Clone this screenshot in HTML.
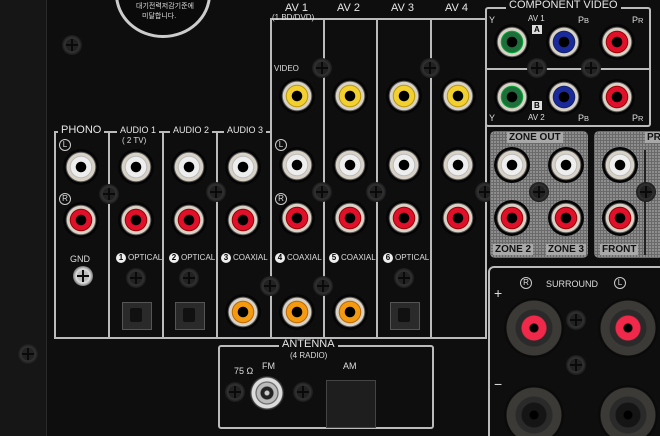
<!DOCTYPE html><html><head><style>
html,body{margin:0;width:660px;height:436px;overflow:hidden}
body{background:#0e0e0e;position:relative;font-family:"Liberation Sans","Noto Sans CJK KR",sans-serif;color:#ddd}
div,i,span{position:absolute;display:block}
.strip{left:0;top:0;width:46px;height:436px;background:#161616;border-right:1px solid #2a2a2a}
.v{width:2px;background:#bbb}
.h{height:2px;background:#bbb}
.lb{background:#0e0e0e;font-size:10px;padding:0 3px;line-height:11px;white-space:nowrap;color:#e6e6e6}
.sm{font-size:8px;color:#ddd;white-space:nowrap}
.j{width:36px;height:36px;margin:-18px 0 0 -18px;border-radius:50%}
.w{background:radial-gradient(circle,#000 0 5px,#eee 5.5px 10px,#bbb 10.5px 11px,#d8d2c6 11.5px 14px,#555 14.5px 15px,#050505 15.5px)}
.r{background:radial-gradient(circle,#000 0 5px,#e0102a 5.5px 10px,#900 10.5px 11px,#d8d2c6 11.5px 14px,#555 14.5px 15px,#050505 15.5px)}
.y{background:radial-gradient(circle,#000 0 5px,#f2d030 5.5px 10px,#b90 10.5px 11px,#d8d2c6 11.5px 14px,#555 14.5px 15px,#050505 15.5px)}
.o{background:radial-gradient(circle,#000 0 5px,#f39a10 5.5px 10px,#b60 10.5px 11px,#d8d2c6 11.5px 14px,#555 14.5px 15px,#050505 15.5px)}
.g{background:radial-gradient(circle,#000 0 5px,#1d6e3a 5.5px 10px,#0a3 10.5px 11px,#d8d2c6 11.5px 14px,#555 14.5px 15px,#050505 15.5px)}
.b{background:radial-gradient(circle,#000 0 5px,#1a2a9a 5.5px 10px,#126 10.5px 11px,#d8d2c6 11.5px 14px,#555 14.5px 15px,#050505 15.5px)}
.s{width:20px;height:20px;margin:-10px 0 0 -10px;border-radius:50%;background:radial-gradient(circle,#222 0 6px,#333 7px,#1a1a1a 10px)}
.s:before{content:"";position:absolute;left:9px;top:4px;width:2px;height:12px;background:#0a0a0a}
.s:after{content:"";position:absolute;left:4px;top:9px;width:12px;height:2px;background:#0a0a0a}
.opt{width:28px;height:26px;margin:-13px 0 0 -14px;background:#2a2a2a;border:1px solid #555}
.opt:after{content:"";position:absolute;left:7px;top:5px;width:12px;height:14px;background:#111;border-radius:2px}
.circ{font-size:8px;border:1px solid #ccc;border-radius:50%;width:10px;height:10px;line-height:10px;text-align:center}
.num{display:inline-block;position:static;background:#eee;color:#000;border-radius:50%;width:10px;height:10px;line-height:10px;text-align:center;font-weight:bold;font-size:8px;margin-right:2px}
.gray{background:#8e8e8e;background-image:repeating-linear-gradient(0deg,#6a6a6a 0 1px,transparent 1px 3px),repeating-linear-gradient(90deg,#6a6a6a 0 1px,transparent 1px 3px);border-radius:5px}
.gl{color:#111;font-size:10px;font-weight:bold;white-space:nowrap;background:#a8a8a8;padding:0 2px}
.sp{width:60px;height:60px;margin:-30px 0 0 -30px;border-radius:50%;background:radial-gradient(circle,#000 0 4px,#f0284a 5px 12px,#2a2a2a 13px 18px,#3c3a36 19px 27px,#0a0a0a 28px)}
.spb{width:60px;height:60px;margin:-30px 0 0 -30px;border-radius:50%;background:radial-gradient(circle,#000 0 4px,#151515 5px 12px,#2a2a2a 13px 18px,#3c3a36 19px 27px,#0a0a0a 28px)}
</style></head><body>
<div class="strip"></div>
<div style="left:115px;top:-50px;width:90px;height:82px;border:3px solid #ccc;border-radius:50%;background:#0a0a0a"></div>
<div class="sm" style="left:136px;top:1px;font-size:7px">대기전력저감기준에</div>
<div class="sm" style="left:142px;top:11px;font-size:7px">미달합니다.</div>
<i class="s" style="left:72px;top:45px"></i>
<i class="s" style="left:28px;top:354px"></i>

<div class="h" style="left:54px;top:131px;width:218px"></div>
<div class="h" style="left:271px;top:18px;width:215px"></div>
<div class="h" style="left:54px;top:337px;width:433px"></div>
<div class="v" style="left:54px;top:131px;height:207px"></div>
<div class="v" style="left:108px;top:131px;height:207px"></div>
<div class="v" style="left:162px;top:131px;height:207px"></div>
<div class="v" style="left:216px;top:131px;height:207px"></div>
<div class="v" style="left:270px;top:18px;height:320px"></div>
<div class="v" style="left:323px;top:18px;height:320px"></div>
<div class="v" style="left:376px;top:18px;height:320px"></div>
<div class="v" style="left:430px;top:18px;height:320px"></div>
<div class="v" style="left:485px;top:18px;height:320px"></div>
<span class="lb" style="left:58px;top:125px;font-size:11px">PHONO</span>
<span class="lb" style="left:117px;top:125px;font-size:9px">AUDIO 1</span>
<span class="sm" style="left:122px;top:136px">( 2 TV)</span>
<span class="lb" style="left:170px;top:125px;font-size:9px">AUDIO 2</span>
<span class="lb" style="left:224px;top:125px;font-size:9px">AUDIO 3</span>
<span class="lb" style="left:282px;top:3px;font-size:11px">AV 1</span>
<span class="sm" style="left:272px;top:13px">(1 BD/DVD)</span>
<span class="lb" style="left:334px;top:3px;font-size:11px">AV 2</span>
<span class="lb" style="left:388px;top:3px;font-size:11px">AV 3</span>
<span class="lb" style="left:442px;top:3px;font-size:11px">AV 4</span>
<span class="sm" style="left:274px;top:64px;font-size:8px">VIDEO</span>
<span class="circ" style="left:59px;top:139px">L</span>
<span class="circ" style="left:59px;top:193px">R</span>
<span class="circ" style="left:275px;top:139px">L</span>
<span class="circ" style="left:275px;top:193px">R</span>

<i class="j y" style="left:297px;top:96px"></i><i class="j y" style="left:350px;top:96px"></i><i class="j y" style="left:404px;top:96px"></i><i class="j y" style="left:458px;top:96px"></i>
<i class="j w" style="left:81px;top:167px"></i><i class="j w" style="left:136px;top:167px"></i><i class="j w" style="left:189px;top:167px"></i><i class="j w" style="left:243px;top:167px"></i><i class="j w" style="left:297px;top:165px"></i><i class="j w" style="left:350px;top:165px"></i><i class="j w" style="left:404px;top:165px"></i><i class="j w" style="left:458px;top:165px"></i>
<i class="j r" style="left:81px;top:220px"></i><i class="j r" style="left:136px;top:220px"></i><i class="j r" style="left:189px;top:220px"></i><i class="j r" style="left:243px;top:220px"></i><i class="j r" style="left:297px;top:218px"></i><i class="j r" style="left:350px;top:218px"></i><i class="j r" style="left:404px;top:218px"></i><i class="j r" style="left:458px;top:218px"></i>
<i class="s" style="left:322px;top:68px"></i><i class="s" style="left:430px;top:68px"></i>
<i class="s" style="left:109px;top:194px"></i><i class="s" style="left:216px;top:192px"></i><i class="s" style="left:322px;top:192px"></i><i class="s" style="left:376px;top:192px"></i><i class="s" style="left:485px;top:192px"></i>

<span class="sm" style="left:70px;top:254px;font-size:9px">GND</span>
<i class="s" style="left:83px;top:276px;background:radial-gradient(circle,#bbb 0 5px,#ddd 7px,#777 10px)"></i>
<span class="sm" style="left:116px;top:253px"><span class="num">1</span>OPTICAL</span>
<span class="sm" style="left:169px;top:253px"><span class="num">2</span>OPTICAL</span>
<span class="sm" style="left:221px;top:253px"><span class="num">3</span>COAXIAL</span>
<span class="sm" style="left:275px;top:253px"><span class="num">4</span>COAXIAL</span>
<span class="sm" style="left:329px;top:253px"><span class="num">5</span>COAXIAL</span>
<span class="sm" style="left:383px;top:253px"><span class="num">6</span>OPTICAL</span>
<i class="s" style="left:136px;top:278px"></i><i class="s" style="left:189px;top:278px"></i><i class="s" style="left:404px;top:278px"></i>
<i class="s" style="left:270px;top:286px"></i><i class="s" style="left:323px;top:286px"></i>
<i class="opt" style="left:136px;top:315px"></i><i class="opt" style="left:189px;top:315px"></i><i class="opt" style="left:404px;top:315px"></i>
<i class="j o" style="left:243px;top:312px"></i><i class="j o" style="left:297px;top:312px"></i><i class="j o" style="left:350px;top:312px"></i>

<div style="left:218px;top:345px;width:212px;height:80px;border:2px solid #bbb;border-radius:3px"></div>
<span class="lb" style="left:279px;top:339px;font-size:11px">ANTENNA</span>
<span class="sm" style="left:290px;top:351px">(4 RADIO)</span>
<span class="sm" style="left:234px;top:366px;font-size:9px">75 Ω</span>
<span class="sm" style="left:262px;top:361px;font-size:9px">FM</span>
<span class="sm" style="left:343px;top:361px;font-size:9px">AM</span>
<i class="s" style="left:235px;top:392px"></i><i class="s" style="left:303px;top:392px"></i>
<i style="left:250px;top:376px;width:34px;height:34px;border-radius:50%;background:radial-gradient(circle,#ccc 0 2px,#222 3px 6px,#bbb 7px 10px,#555 11px,#ddd 12px 15px,#333 16px)"></i>
<div style="left:326px;top:380px;width:48px;height:46px;background:#1e1e1e;border:1px solid #444"></div>

<div style="left:485px;top:7px;width:162px;height:116px;border:2px solid #bbb;border-radius:3px"></div>
<div class="h" style="left:485px;top:68px;width:164px"></div>
<span class="lb" style="left:506px;top:0px;font-size:11px">COMPONENT VIDEO</span>
<span class="sm" style="left:489px;top:15px;font-size:9px">Y</span>
<span class="sm" style="left:528px;top:14px">AV 1</span>
<span class="sm" style="left:532px;top:25px;background:#ddd;color:#000;font-weight:bold;padding:0 2px">A</span>
<span class="sm" style="left:578px;top:15px;font-size:9px">P<small>B</small></span>
<span class="sm" style="left:632px;top:15px;font-size:9px">P<small>R</small></span>
<span class="sm" style="left:489px;top:113px;font-size:9px">Y</span>
<span class="sm" style="left:528px;top:113px">AV 2</span>
<span class="sm" style="left:532px;top:101px;background:#ddd;color:#000;font-weight:bold;padding:0 2px">B</span>
<span class="sm" style="left:578px;top:113px;font-size:9px">P<small>B</small></span>
<span class="sm" style="left:632px;top:113px;font-size:9px">P<small>R</small></span>
<i class="j g" style="left:512px;top:42px"></i><i class="j b" style="left:564px;top:42px"></i><i class="j r" style="left:617px;top:42px"></i>
<i class="j g" style="left:512px;top:97px"></i><i class="j b" style="left:564px;top:97px"></i><i class="j r" style="left:617px;top:97px"></i>
<i class="s" style="left:537px;top:68px"></i><i class="s" style="left:591px;top:68px"></i>

<div class="gray" style="left:490px;top:131px;width:98px;height:127px"></div>
<div class="gray" style="left:594px;top:131px;width:70px;height:127px"></div>
<span class="gl" style="left:507px;top:132px">ZONE OUT</span>
<span class="gl" style="left:645px;top:132px">PR</span>
<span class="gl" style="left:493px;top:244px">ZONE 2</span>
<span class="gl" style="left:546px;top:244px">ZONE 3</span>
<span class="gl" style="left:600px;top:244px">FRONT</span>
<div style="left:644px;top:150px;width:2px;height:105px;background:#222"></div>
<i class="j w" style="left:512px;top:165px"></i><i class="j w" style="left:566px;top:165px"></i><i class="j w" style="left:620px;top:165px"></i>
<i class="j r" style="left:512px;top:218px"></i><i class="j r" style="left:566px;top:218px"></i><i class="j r" style="left:620px;top:218px"></i>
<i class="s" style="left:539px;top:192px"></i><i class="s" style="left:646px;top:192px"></i>

<div style="left:488px;top:266px;width:180px;height:180px;border:2px solid #bbb;border-radius:6px"></div>
<span class="sm" style="left:494px;top:285px;font-size:14px">+</span>
<span class="sm" style="left:494px;top:376px;font-size:14px">−</span>
<span class="circ" style="left:520px;top:277px">R</span>
<span class="circ" style="left:614px;top:277px">L</span>
<span class="sm" style="left:546px;top:279px;font-size:9px">SURROUND</span>
<i class="sp" style="left:534px;top:328px"></i><i class="sp" style="left:628px;top:328px"></i>
<i class="spb" style="left:534px;top:415px"></i><i class="spb" style="left:628px;top:415px"></i>
<i class="s" style="left:576px;top:320px"></i><i class="s" style="left:576px;top:365px"></i>
</body></html>
